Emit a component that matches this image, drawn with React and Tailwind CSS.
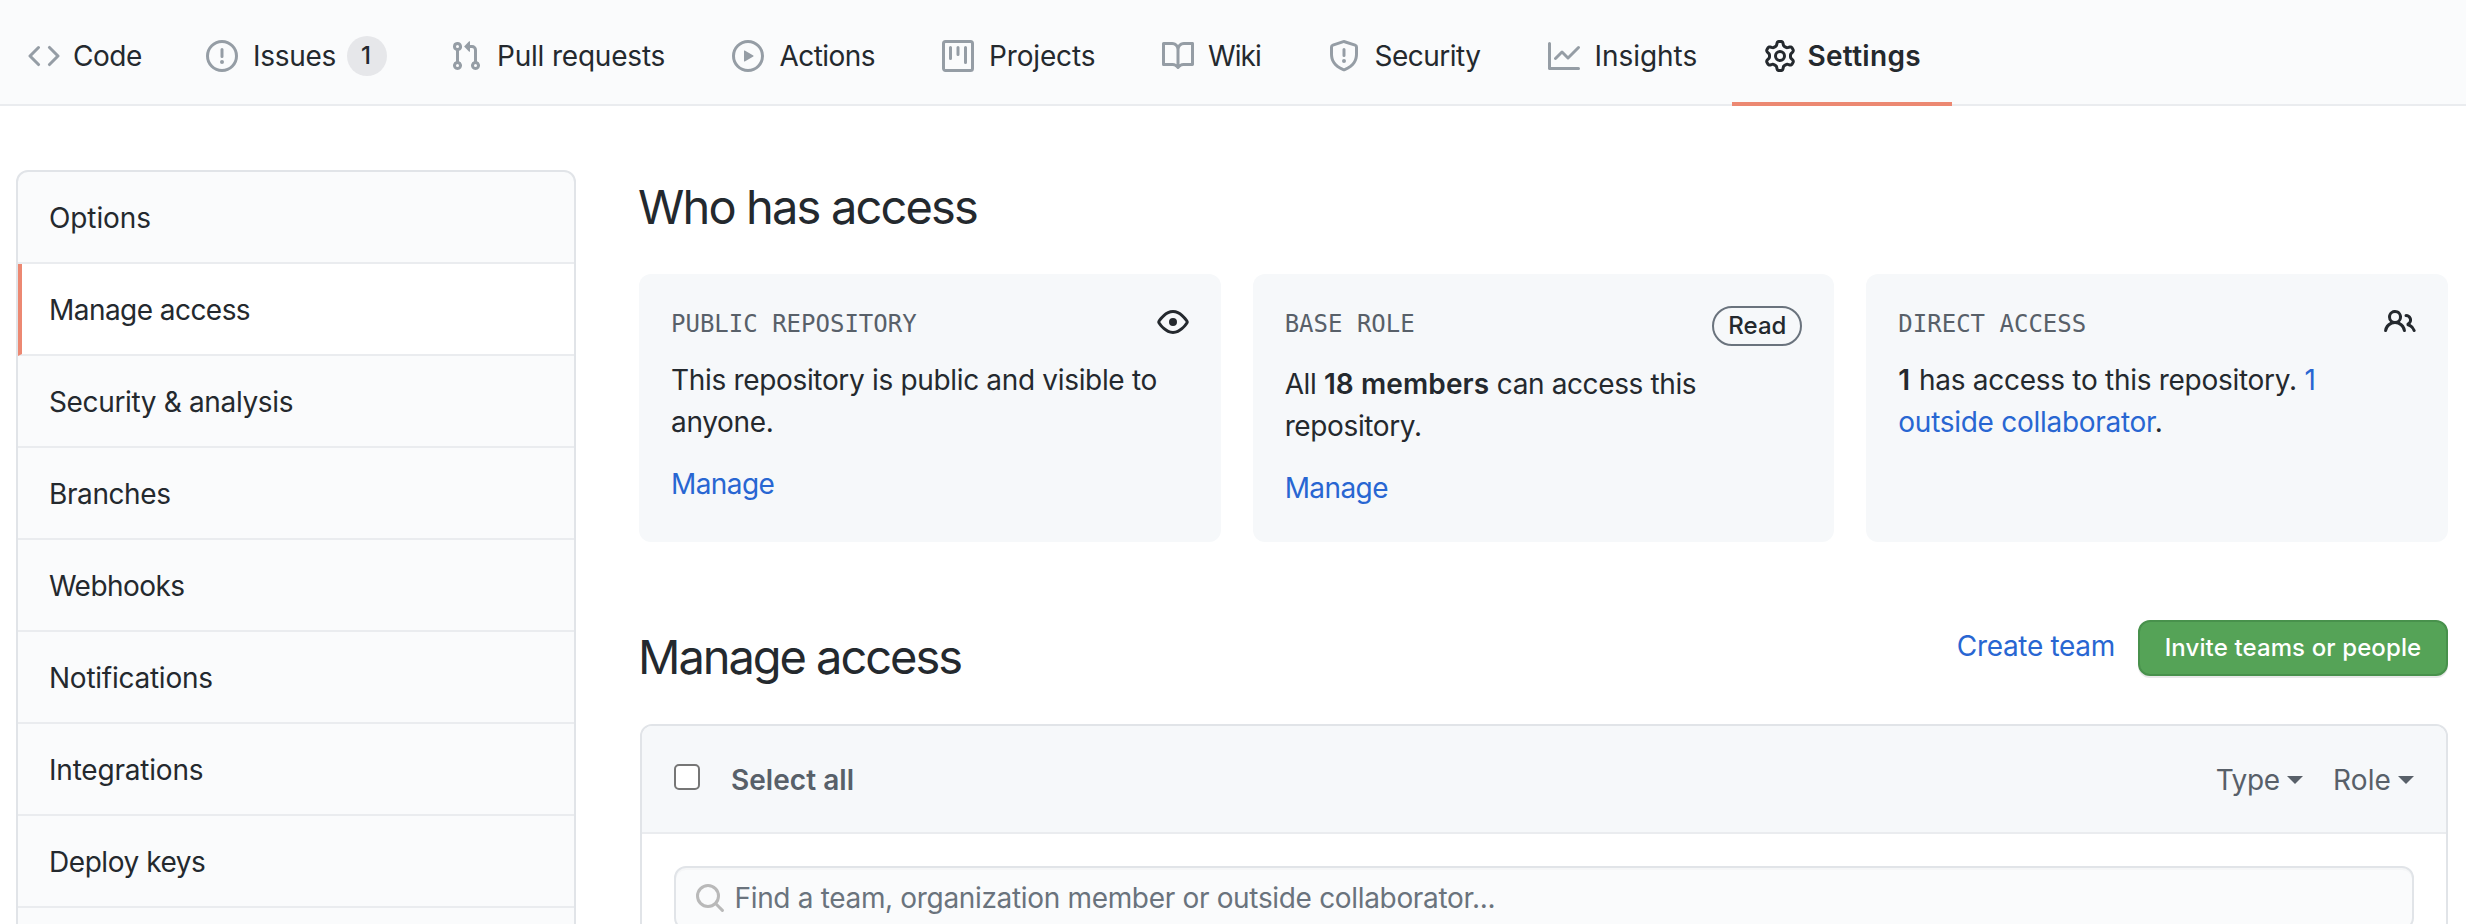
import React from "react";

const ICONS = {
  code: "M4.72 3.22a.75.75 0 011.06 1.06L2.06 8l3.72 3.72a.75.75 0 11-1.06 1.06L.47 8.53a.75.75 0 010-1.06l4.25-4.25zm6.56 0a.75.75 0 10-1.06 1.06L13.94 8l-3.72 3.72a.75.75 0 101.06 1.06l4.25-4.25a.75.75 0 000-1.06l-4.25-4.25z",
  issue: "M8 1.5a6.5 6.5 0 100 13 6.5 6.5 0 000-13zM0 8a8 8 0 1116 0A8 8 0 010 8zm9 3a1 1 0 11-2 0 1 1 0 012 0zm-.25-6.25a.75.75 0 00-1.5 0v3.5a.75.75 0 001.5 0v-3.5z",
  pull: "M7.177 3.073L9.573.677A.25.25 0 0110 .854v4.792a.25.25 0 01-.427.177L7.177 3.427a.25.25 0 010-.354zM3.75 2.5a.75.75 0 100 1.5.75.75 0 000-1.5zm-2.25.75a2.25 2.25 0 113 2.122v5.256a2.251 2.251 0 11-1.5 0V5.372A2.25 2.25 0 011.5 3.25zM11 2.5h-1V4h1a1 1 0 011 1v5.628a2.251 2.251 0 101.5 0V5A2.5 2.5 0 0011 2.5zm1 10.25a.75.75 0 111.5 0 .75.75 0 01-1.5 0zM3.75 12a.75.75 0 100 1.5.75.75 0 000-1.5z",
  play: "M1.5 8a6.5 6.5 0 1113 0 6.5 6.5 0 01-13 0zM8 0a8 8 0 100 16A8 8 0 008 0zM6.379 5.227A.25.25 0 006 5.442v5.117a.25.25 0 00.379.214l4.264-2.559a.25.25 0 000-.428L6.379 5.227z",
  project: "M1.75 0A1.75 1.75 0 000 1.75v12.5C0 15.216.784 16 1.75 16h12.5A1.75 1.75 0 0016 14.25V1.75A1.75 1.75 0 0014.25 0H1.75zM1.5 1.75a.25.25 0 01.25-.25h12.5a.25.25 0 01.25.25v12.5a.25.25 0 01-.25.25H1.75a.25.25 0 01-.25-.25V1.75zM11.75 3a.75.75 0 00-.75.75v7.5a.75.75 0 001.5 0v-7.5a.75.75 0 00-.75-.75zm-8.25.75a.75.75 0 011.5 0v5.5a.75.75 0 01-1.5 0v-5.5zM8 3a.75.75 0 00-.75.75v3.5a.75.75 0 001.5 0v-3.5A.75.75 0 008 3z",
  book: "M0 1.75A.75.75 0 01.75 1h4.253c1.227 0 2.317.59 3 1.501A3.744 3.744 0 0111.006 1h4.245a.75.75 0 01.75.75v10.5a.75.75 0 01-.75.75h-4.507a2.25 2.25 0 00-1.591.659l-.622.621a.75.75 0 01-1.06 0l-.622-.621A2.25 2.25 0 005.258 13H.75a.75.75 0 01-.75-.75V1.75zm8.755 3a2.25 2.25 0 012.25-2.25H14.5v9h-3.757c-.71 0-1.4.201-1.992.572l.004-7.322zm-1.504 7.324l.004-5.073-.002-2.253A2.25 2.25 0 005.003 2.5H1.5v9h3.757a3.75 3.75 0 011.994.574z",
  shield: "M7.467.133a1.75 1.75 0 011.066 0l5.25 1.68A1.75 1.75 0 0115 3.48V7c0 1.566-.32 3.182-1.303 4.682-.983 1.498-2.585 2.813-5.032 3.855a1.7 1.7 0 01-1.33 0c-2.447-1.042-4.049-2.357-5.032-3.855C1.32 10.182 1 8.566 1 7V3.48a1.75 1.75 0 011.217-1.667l5.25-1.68zm.61 1.429a.25.25 0 00-.153 0l-5.25 1.68a.25.25 0 00-.174.238V7c0 1.358.275 2.666 1.057 3.86.784 1.194 2.121 2.34 4.366 3.297a.2.2 0 00.154 0c2.245-.956 3.582-2.104 4.366-3.298C13.225 9.666 13.5 8.36 13.5 7V3.48a.25.25 0 00-.174-.237l-5.25-1.68zM9 10.5a1 1 0 11-2 0 1 1 0 012 0zm-.25-5.75a.75.75 0 10-1.5 0v3a.75.75 0 001.5 0v-3z",
  graph: "M1.5 1.75a.75.75 0 00-1.5 0v12.5c0 .414.336.75.75.75h14.5a.75.75 0 000-1.5H1.5V1.75zm14.28 2.53a.75.75 0 00-1.06-1.06L10 7.94 7.53 5.47a.75.75 0 00-1.06 0L3.22 8.72a.75.75 0 001.06 1.06L7 7.06l2.47 2.47a.75.75 0 001.06 0l5.25-5.25z",
  gear: "M7.429 1.525a6.593 6.593 0 011.142 0c.036.003.108.036.137.146l.289 1.105c.147.56.55.967.997 1.189.174.086.341.183.501.29.417.278.97.423 1.53.27l1.102-.303c.11-.03.175.016.195.046.219.31.41.641.573.989.014.031.022.11-.059.19l-.815.806c-.411.406-.562.957-.53 1.456a4.588 4.588 0 010 .582c-.032.499.119 1.05.53 1.456l.815.806c.08.08.073.159.059.19a6.494 6.494 0 01-.573.99c-.02.029-.086.074-.195.045l-1.103-.303c-.559-.153-1.112-.008-1.529.27-.16.107-.327.204-.5.29-.449.222-.851.628-.998 1.189l-.289 1.105c-.029.11-.101.143-.137.146a6.613 6.613 0 01-1.142 0c-.036-.003-.108-.037-.137-.146l-.289-1.105c-.147-.56-.55-.967-.997-1.189a4.502 4.502 0 01-.501-.29c-.417-.278-.97-.423-1.53-.27l-1.102.303c-.11.03-.175-.016-.195-.046a6.492 6.492 0 01-.573-.989c-.014-.031-.022-.11.059-.19l.815-.806c.411-.406.562-.957.53-1.456a4.587 4.587 0 010-.582c.032-.499-.119-1.05-.53-1.456l-.815-.806c-.08-.08-.073-.159-.059-.19a6.44 6.44 0 01.573-.99c.02-.029.086-.075.195-.045l1.103.303c.559.153 1.112.008 1.529-.27.16-.107.327-.204.5-.29.449-.222.851-.628.998-1.189l.289-1.105c.029-.11.101-.143.137-.146zM8 0c-.236 0-.47.01-.701.03-.743.065-1.29.615-1.458 1.261l-.29 1.106c-.017.066-.078.158-.211.224a5.994 5.994 0 00-.668.386c-.123.082-.233.09-.3.071L3.27 2.776c-.644-.177-1.392.02-1.82.63a7.977 7.977 0 00-.704 1.217c-.315.675-.111 1.422.363 1.891l.815.806c.05.048.098.147.088.294a6.084 6.084 0 000 .772c.01.147-.038.246-.088.294l-.815.806c-.474.469-.678 1.216-.363 1.891.2.428.436.835.704 1.218.428.609 1.176.806 1.82.63l1.103-.303c.066-.019.176-.011.299.071.213.143.436.272.668.386.133.066.194.158.212.224l.289 1.106c.169.646.715 1.196 1.458 1.26a8.094 8.094 0 001.402 0c.743-.064 1.29-.614 1.458-1.26l.29-1.106c.017-.066.078-.158.211-.224a5.98 5.98 0 00.668-.386c.123-.082.233-.09.3-.071l1.102.302c.644.177 1.392-.02 1.82-.63.268-.382.505-.789.704-1.217.315-.675.111-1.422-.364-1.891l-.814-.806c-.05-.048-.098-.147-.088-.294a6.1 6.1 0 000-.772c-.01-.147.039-.246.088-.294l.814-.806c.475-.469.679-1.216.364-1.891a7.992 7.992 0 00-.704-1.218c-.428-.609-1.176-.806-1.82-.63l-1.103.303c-.066.019-.176.011-.299-.071a5.991 5.991 0 00-.668-.386c-.133-.066-.194-.158-.212-.224L10.16 1.29C9.99.645 9.444.095 8.701.031A8.094 8.094 0 008 0zm1.5 8a1.5 1.5 0 11-3 0 1.5 1.5 0 013 0zM11 8a3 3 0 11-6 0 3 3 0 016 0z",
  eye: "M1.679 7.932c.412-.621 1.242-1.75 2.366-2.717C5.175 4.242 6.527 3.5 8 3.5c1.473 0 2.824.742 3.955 1.715 1.124.967 1.954 2.096 2.366 2.717a.119.119 0 010 .136c-.412.621-1.242 1.75-2.366 2.717C10.825 11.758 9.473 12.5 8 12.5c-1.473 0-2.824-.742-3.955-1.715C2.92 9.818 2.09 8.69 1.679 8.068a.119.119 0 010-.136zM8 2c-1.981 0-3.67.992-4.933 2.078C1.797 5.169.88 6.423.43 7.1a1.619 1.619 0 000 1.798c.45.678 1.367 1.932 2.637 3.024C4.329 13.008 6.019 14 8 14c1.981 0 3.67-.992 4.933-2.078 1.27-1.091 2.187-2.345 2.637-3.023a1.619 1.619 0 000-1.798c-.45-.678-1.367-1.932-2.637-3.023C11.671 2.992 9.981 2 8 2zm0 8a2 2 0 100-4 2 2 0 000 4z",
  people: "M5.5 3.5a2 2 0 100 4 2 2 0 000-4zM2 5.5a3.5 3.5 0 115.898 2.549 5.507 5.507 0 013.034 4.084.75.75 0 11-1.482.235 4.001 4.001 0 00-7.9 0 .75.75 0 01-1.482-.236A5.507 5.507 0 013.102 8.05 3.49 3.49 0 012 5.5zM11 4a.75.75 0 100 1.5 1.5 1.5 0 01.666 2.844.75.75 0 00-.416.672v.352a.75.75 0 00.574.73c1.2.289 2.162 1.2 2.522 2.372a.75.75 0 101.434-.44 5.01 5.01 0 00-2.56-3.012A3 3 0 0011 4z",
};

function Icon({ name, className = "" }) {
  return (
    <svg viewBox="0 0 16 16" className={`size-8 shrink-0 ${className}`} fill="currentColor" fillRule="evenodd" aria-hidden="true">
      <path d={ICONS[name]} />
    </svg>
  );
}

const TABS = [
  { label: "Code", icon: "code", item: "w-[178px] gap-[13px]", text: "tracking-[-0.5px]" },
  { label: "Issues", icon: "issue", item: "w-[244px] gap-[14px]", text: "pl-px tracking-[-0.31px]", count: "1" },
  { label: "Pull requests", icon: "pull", item: "w-[282px] gap-[15px]", text: "tracking-[-0.2px]" },
  { label: "Actions", icon: "play", item: "w-[210px] gap-[15.5px]", text: "tracking-[-0.55px]" },
  { label: "Projects", icon: "project", item: "w-[220px] gap-[15px]", text: "tracking-[-0.15px]" },
  { label: "Wiki", icon: "book", item: "w-[166px] gap-[14px]", text: "tracking-[-0.9px]" },
  { label: "Security", icon: "shield", item: "w-[220px] gap-[14.5px]", text: "tracking-[-0.5px]" },
  { label: "Insights", icon: "graph", item: "w-[184px] gap-[14.5px]", text: "tracking-[-0.05px]" },
];

const SIDEBAR = [
  ["Options", "tracking-[-0.1px]"],
  ["Manage access", "tracking-[-0.55px]"],
  ["Security & analysis", "tracking-[-0.35px]"],
  ["Branches", "tracking-[-0.4px]"],
  ["Webhooks", "tracking-[-0.55px]"],
  ["Notifications", "tracking-[-0.25px]"],
  ["Integrations", "tracking-[-0.2px]"],
  ["Deploy keys", "tracking-[-0.45px]"],
];

function Nav() {
  return (
    <nav className="flex h-[106px] shrink-0 border-b-2 border-[#eaecef] bg-[#fafbfc] pl-7">
      {TABS.map((t) => (
        <a key={t.label} className={`flex h-28 items-center whitespace-nowrap ${t.item}`}>
          <Icon name={t.icon} className="text-[#959da5]" />
          <span className={t.text}>{t.label}</span>
          {t.count && (
            <span className="-ml-[3px] flex h-10 w-10 items-center justify-center rounded-full bg-[#e6e7ea] pr-0.5 text-2xl font-medium">
              {t.count}
            </span>
          )}
        </a>
      ))}
      <a className="flex h-[106px] w-[220px] items-center gap-[11.5px] border-b-4 border-[#ec8872] pt-2.5 pl-8 font-semibold tracking-[0.3px] whitespace-nowrap">
        <Icon name="gear" />
        <span>Settings</span>
      </a>
    </nav>
  );
}

function Sidebar() {
  return (
    <aside className="h-[840px] w-[560px] shrink-0 overflow-hidden rounded-xl border-2 border-[#e1e4e8] bg-[#fafbfc]">
      {SIDEBAR.map(([label, tracking]) => (
        <a
          key={label}
          className={`flex h-[92px] items-center border-b-2 border-b-[#eaecef] pt-0.5 whitespace-nowrap ${tracking} ${
            label === "Manage access" ? "border-l-4 border-l-[#ec8872] bg-white pl-[27px]" : "pl-[31px]"
          }`}
        >
          {label}
        </a>
      ))}
    </aside>
  );
}

function Card({ title, badge, children }) {
  return (
    <section className="h-[268px] min-w-0 flex-1 rounded-xl bg-[#f6f8fa] p-8">
      <div className="flex items-start justify-between">
        <h3 className="font-['DejaVu_Sans_Mono',monospace] text-2xl leading-9 whitespace-pre text-[#586069]">{title}</h3>
        {badge}
      </div>
      {children}
    </section>
  );
}

function Caret() {
  return (
    <svg viewBox="0 0 16 8" className="h-2 w-4" fill="currentColor" aria-hidden="true">
      <path d="M0 0h16L8 8z" />
    </svg>
  );
}

export default function App() {
  return (
    <div className="flex h-[924px] w-[2466px] flex-col overflow-hidden bg-white font-[Inter,sans-serif] text-[28px] leading-[42px] text-[#24292e]">
      <Nav />
      <div className="flex min-h-0 flex-1 gap-16 overflow-hidden pt-16 pr-[18px] pl-4">
        <Sidebar />
        <main className="flex min-w-0 flex-1 flex-col">
          <h2 className="mb-8 -ml-0.5 h-[72px] shrink-0 pt-px text-[47px] leading-[72px] tracking-[-1.85px] whitespace-nowrap">Who has access</h2>
          <div className="-ml-px flex shrink-0 gap-8">
            <Card title="PUBLIC REPOSITORY" badge={<Icon name="eye" />}>
              <p className="mt-[17px] tracking-[-0.33px]">
                This repository is public and visible to
                <br />
                anyone.
              </p>
              <a className="mt-5 block tracking-[-0.6px] text-[#2866d2]">Manage</a>
            </Card>
            <Card
              title="BASE ROLE"
              badge={
                <span className="flex h-10 w-[90px] items-center justify-center rounded-full border-2 border-[#6a737d] text-2xl font-medium">
                  Read
                </span>
              }
            >
              <p className="mt-[17px] tracking-[-0.38px]">
                All <b className="font-semibold tracking-[0.1px]">18 members</b> can access this
                <br />
                repository.
              </p>
              <a className="mt-5 block tracking-[-0.6px] text-[#2866d2]">Manage</a>
            </Card>
            <Card title="DIRECT ACCESS" badge={<Icon name="people" />}>
              <p className="mt-[17px] tracking-[-0.28px]">
                <b className="font-semibold tracking-[1.2px]">1</b> has access to this repository.{" "}
                <a className="text-[#2866d2]">
                  1<br />
                  outside collaborator
                </a>
                .
              </p>
            </Card>
          </div>
          <div className="mt-[78px] flex h-[104px] shrink-0 items-start justify-between">
            <h2 className="-ml-0.5 pt-px text-[47px] leading-[72px] tracking-[-2.05px] whitespace-nowrap">Manage access</h2>
            <div className="flex items-start gap-[23px]">
              <a className="pt-[5px] tracking-[-0.31px] text-[#2866d2]">Create team</a>
              <button className="flex h-14 w-[310px] items-center justify-center rounded-xl border-2 border-[#48914c] bg-[#55a357] text-2xl font-medium tracking-[0.12px] whitespace-nowrap text-white shadow-[0_2px_0_rgba(27,31,35,0.1)]">
                Invite teams or people
              </button>
            </div>
          </div>
          <section className="h-[240px] shrink-0 overflow-hidden rounded-xl border-2 border-[#e1e4e8]">
            <header className="flex h-[108px] items-center border-b-2 border-[#eaecef] bg-[#f6f8fa] pr-8 pl-8 text-[#586069]">
              <span className="mb-1 size-[26px] rounded-[5px] border-2 border-[#767676] bg-white" />
              <span className="ml-[31px] pt-0.5 font-semibold tracking-[0.04px]">Select all</span>
              <span className="ml-auto flex items-center gap-[7.5px] pt-0.5 tracking-[-0.4px]">
                Type <Caret />
              </span>
              <span className="ml-[30px] flex items-center gap-[7px] pt-0.5 tracking-[0.1px]">
                Role <Caret />
              </span>
            </header>
            <div className="px-8 pt-8">
              <div className="flex h-16 items-center gap-[10.5px] rounded-xl border-2 border-[#e1e4e8] bg-[#fafbfc] pl-5 text-[#6a737d] shadow-[inset_0_2px_0_rgba(225,228,232,0.2)]">
                <svg viewBox="0 0 28 28" className="size-7 shrink-0" fill="none" stroke="#b9b9b9" strokeWidth="3" strokeLinecap="round" aria-hidden="true">
                  <circle cx="12" cy="12" r="10.5" />
                  <path d="M19.8 19.8l6.6 6.6" />
                </svg>
                <span className="tracking-[-0.33px] whitespace-nowrap">Find a team, organization member or outside collaborator...</span>
              </div>
            </div>
          </section>
        </main>
      </div>
    </div>
  );
}
